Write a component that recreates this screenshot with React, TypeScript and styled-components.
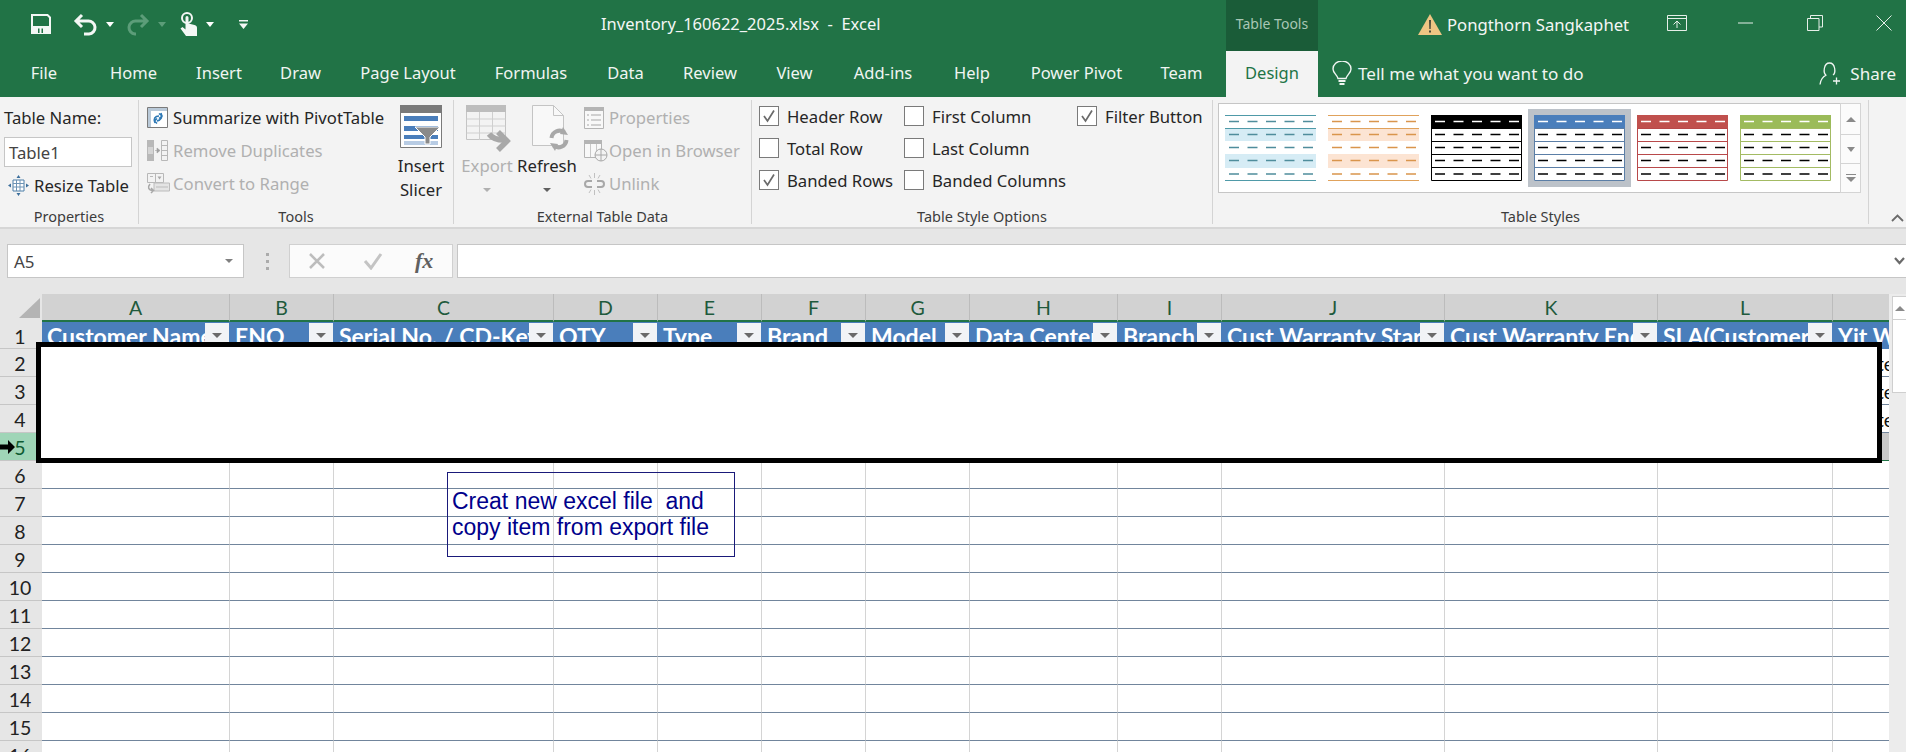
import React from "react";
import styled, { createGlobalStyle } from "styled-components";

const UI_FONT = `"Noto Sans", "Open Sans", sans-serif`;
const SHEET_FONT = `Lato, "Noto Sans", sans-serif`;

const GlobalStyle = createGlobalStyle`
  html, body {
    margin: 0;
    height: 752px;
    overflow: hidden;
    background: #fff;
    font-family: ${UI_FONT};
  }
  * { box-sizing: border-box; }
`;

const Window = styled.div`
  width: 1906px;
  height: 752px;
  overflow: hidden;
  display: flex;
  flex-direction: column;
`;

/* ---------- title bar ---------- */

const TitleBar = styled.div`
  height: 51px;
  flex: none;
  display: flex;
  background: #217346;
  color: #f4f7f5;
  font-size: 16.5px;
`;

const QuickAccess = styled.div`
  width: 601px;
  padding-left: 31px;
  display: flex;
  align-items: center;
  padding-bottom: 3px;
`;

const QatIcon = styled.span<{ $ml?: number }>`
  display: inline-flex;
  margin-left: ${(p) => p.$ml ?? 0}px;
`;

const Caret = styled.span<{ $ml?: number; $color?: string; $size?: number }>`
  display: inline-block;
  margin-left: ${(p) => p.$ml ?? 0}px;
  width: 0;
  height: 0;
  border-left: ${(p) => p.$size ?? 4.5}px solid transparent;
  border-right: ${(p) => p.$size ?? 4.5}px solid transparent;
  border-top: ${(p) => (p.$size ?? 4.5) + 0.5}px solid ${(p) => p.$color ?? "#fff"};
`;

const DocTitle = styled.div`
  width: 625px;
  height: 48px;
  line-height: 48px;
  white-space: pre;
`;

const ContextTab = styled.div`
  width: 92px;
  background: #1a5c38;
  color: #a9c7b5;
  font-size: 14px;
  text-align: center;
  line-height: 48px;
`;

const UserName = styled.div`
  margin-left: 100px;
  display: flex;
  align-items: center;
  height: 48px;
  gap: 5px;
  font-size: 16.7px;
`;

const WindowButton = styled.span<{ $ml: number }>`
  display: inline-flex;
  align-items: center;
  height: 46px;
  margin-left: ${(p) => p.$ml}px;
`;

/* ---------- tabs ---------- */

const TabBar = styled.div`
  height: 46px;
  flex: none;
  display: flex;
  align-items: stretch;
  background: #217346;
  color: #f0f5f2;
  font-size: 16.5px;
`;

const Tab = styled.div<{ $w: number; $active?: boolean }>`
  width: ${(p) => p.$w}px;
  text-align: center;
  line-height: 44px;
  background: ${(p) => (p.$active ? "#f3f3f3" : "transparent")};
  color: ${(p) => (p.$active ? "#217346" : "inherit")};
`;

const TellMe = styled.div`
  margin-left: 14px;
  display: flex;
  align-items: center;
  gap: 6px;
  padding-bottom: 2px;
  font-size: 17.1px;
`;

const Share = styled.div`
  margin-left: auto;
  margin-right: 10px;
  display: flex;
  align-items: center;
  gap: 8px;
  padding-bottom: 2px;
  font-size: 17px;
`;

/* ---------- ribbon ---------- */

const Ribbon = styled.div`
  height: 132px;
  flex: none;
  display: flex;
  padding-top: 3px;
  background: #f3f3f3;
  border-bottom: 2px solid #d6d6d6;
  color: #262626;
  font-size: 16.7px;
`;

const Group = styled.section<{ $w: number }>`
  width: ${(p) => p.$w}px;
  height: 124px;
  display: flex;
  flex-direction: column;
  border-right: 1px solid #d4d4d4;
`;

const GroupBody = styled.div<{ $pl: number }>`
  flex: 1;
  min-height: 0;
  display: flex;
  padding-left: ${(p) => p.$pl}px;
`;

const GroupLabel = styled.div`
  height: 15px;
  padding-bottom: 1px;
  line-height: 14px;
  font-size: 14.5px;
  text-align: center;
  color: #3c3c3c;
  white-space: nowrap;
`;

const Stack = styled.div<{ $w?: number; $ml?: number }>`
  display: flex;
  flex-direction: column;
  padding-top: 1px;
  width: ${(p) => (p.$w ? `${p.$w}px` : "auto")};
  margin-left: ${(p) => p.$ml ?? 0}px;
  flex: none;
`;

const StackRow = styled.div<{ $disabled?: boolean; $gap?: number; $mt?: number }>`
  height: 33px;
  margin-top: ${(p) => p.$mt ?? 0}px;
  display: flex;
  align-items: center;
  gap: ${(p) => p.$gap ?? 5}px;
  white-space: nowrap;
  color: ${(p) => (p.$disabled ? "#b0b0b0" : "inherit")};
`;

const NameInput = styled.div`
  width: 128px;
  height: 30px;
  line-height: 30px;
  padding-left: 4px;
  background: #fff;
  border: 1px solid #c6c6c6;
  color: #444;
`;

const ResizeSlot = styled.span`
  display: inline-flex;
  margin-left: 4px;
`;

const BigButton = styled.div<{ $w: number; $ml?: number; $disabled?: boolean }>`
  width: ${(p) => p.$w}px;
  margin-left: ${(p) => p.$ml ?? 0}px;
  flex: none;
  padding-top: 5px;
  display: flex;
  flex-direction: column;
  align-items: center;
  color: ${(p) => (p.$disabled ? "#b0b0b0" : "inherit")};
`;

const BigIcon = styled.div`
  height: 43px;
  margin-bottom: 6px;
  display: flex;
  justify-content: center;
`;

const BigLine = styled.div`
  height: 24px;
  line-height: 24px;
  white-space: nowrap;
`;

const CaretLine = styled.div`
  height: 24px;
  display: flex;
  align-items: center;
  justify-content: center;
`;

const OptionGrid = styled.div`
  display: grid;
  grid-auto-flow: column;
  grid-template-rows: repeat(3, 32px);
  grid-template-columns: 145px 173px auto;
`;

const Option = styled.label`
  display: flex;
  align-items: center;
  gap: 8px;
  white-space: nowrap;
`;

const CheckBox = styled.span`
  width: 20px;
  height: 20px;
  flex: none;
  display: inline-flex;
  align-items: center;
  justify-content: center;
  background: #fff;
  border: 1px solid #7a7a7a;
`;

const Gallery = styled.div`
  margin: 3px 0 0 5px;
  display: flex;
  height: 90px;
  width: 643px;
`;

const GalleryItems = styled.div`
  width: 622px;
  display: flex;
  align-items: center;
  background: #fff;
  border: 1px solid #c6c6c6;
  border-right: none;
`;

const GalleryItem = styled.div<{ $selected?: boolean }>`
  width: 103px;
  height: 78px;
  flex: none;
  display: flex;
  align-items: center;
  justify-content: center;
  background: ${(p) => (p.$selected ? "#bcc2c9" : "transparent")};
`;

const GalleryScroll = styled.div`
  width: 21px;
  display: flex;
  flex-direction: column;
`;

const GalleryButton = styled.div<{ $h: number }>`
  height: ${(p) => p.$h}px;
  display: flex;
  align-items: center;
  justify-content: center;
  background: #fbfbfb;
  border: 1px solid #d4d4d4;
  margin-top: -1px;
  &:first-child {
    margin-top: 0;
  }
`;

const UpCaret = styled.span`
  width: 0;
  height: 0;
  border-left: 5px solid transparent;
  border-right: 5px solid transparent;
  border-bottom: 5px solid #8a8a8a;
`;

const MoreCaret = styled.span`
  display: inline-flex;
  flex-direction: column;
  align-items: center;
  gap: 2px;
  &::before {
    content: "";
    width: 10px;
    height: 1px;
    background: #8a8a8a;
  }
  &::after {
    content: "";
    width: 0;
    height: 0;
    border-left: 5px solid transparent;
    border-right: 5px solid transparent;
    border-top: 5px solid #8a8a8a;
  }
`;

const CollapseArea = styled.div`
  flex: 1;
  height: 124px;
  display: flex;
  align-items: flex-end;
  justify-content: flex-end;
  padding: 0 2px 2px 0;
`;

/* ---------- formula bar ---------- */

const FormulaBar = styled.div`
  height: 65px;
  flex: none;
  display: flex;
  padding: 15px 0 16px 7px;
  background: #e6e6e6;
`;

const NameBox = styled.div`
  width: 237px;
  display: flex;
  align-items: center;
  justify-content: space-between;
  padding: 0 10px 0 6px;
  background: #fff;
  border: 1px solid #c6c6c6;
  font-size: 17px;
  color: #444;
`;

const GripDots = styled.div`
  width: 45px;
  display: flex;
  flex-direction: column;
  align-items: center;
  justify-content: center;
  gap: 4px;
  padding-left: 2px;
  & > i {
    width: 3px;
    height: 3px;
    background: #ababab;
  }
`;

const FxButtons = styled.div`
  width: 164px;
  display: flex;
  align-items: center;
  padding-left: 18px;
  gap: 37px;
  background: #fbfbfb;
  border: 1px solid #d0d0d0;
`;

const FxLabel = styled.span`
  font-family: "Liberation Serif", serif;
  font-style: italic;
  font-weight: 700;
  font-size: 22px;
  color: #606060;
  margin-left: -5px;
`;

const FormulaInput = styled.div`
  flex: 1;
  margin-left: 4px;
  display: flex;
  align-items: center;
  justify-content: flex-end;
  padding-right: 1px;
  background: #fff;
  border: 1px solid #c6c6c6;
  border-right: none;
`;

/* ---------- sheet ---------- */

const SheetArea = styled.div`
  flex: 1;
  min-height: 0;
  position: relative;
  display: flex;
  overflow: hidden;
  background: #fff;
`;

const SheetGrid = styled.div`
  width: 1889px;
  flex: none;
  overflow: hidden;
  font-family: ${SHEET_FONT};
`;

const HeadRow = styled.div`
  height: 28px;
  display: flex;
`;

const Corner = styled.div`
  width: 42px;
  flex: none;
  display: flex;
  justify-content: flex-end;
  align-items: center;
  padding: 0 2px 0 0;
  background: #e6e6e6;
`;

const ColHead = styled.div<{ $w: number }>`
  width: ${(p) => p.$w}px;
  flex: none;
  height: 28px;
  line-height: 27px;
  text-align: center;
  font-size: 19.5px;
  color: #1f5a3c;
  background: #d2d2d2;
  border-right: 1px solid #bcbcbc;
  border-bottom: 2px solid #217346;
  &:last-child {
    border-right: none;
  }
`;

const Row = styled.div<{ $first?: boolean }>`
  height: ${(p) => (p.$first ? 27 : 28)}px;
  display: flex;
`;

const RowHead = styled.div<{ $selected?: boolean }>`
  width: 42px;
  flex: none;
  text-align: center;
  line-height: 29px;
  font-size: 19.5px;
  padding-right: 2px;
  color: ${(p) => (p.$selected ? "#0f5c32" : "#222")};
  background: ${(p) => (p.$selected ? "#9fd5b7" : "#e6e6e6")};
  border-bottom: 1px solid #c6c6c6;
`;

const Cell = styled.div<{ $w: number; $selected?: boolean }>`
  width: ${(p) => p.$w}px;
  flex: none;
  overflow: hidden;
  white-space: nowrap;
  line-height: 30px;
  font-size: 19px;
  color: #111;
  background: ${(p) => (p.$selected ? "#c8c8c8" : "#fff")};
  border-right: 1px solid #d4d4d4;
  border-bottom: 1px solid ${(p) => (p.$selected ? "#217346" : "#71859c")};
`;

const TailText = styled.span`
  padding-left: 44px;
`;

const HeaderCell = styled.div<{ $w: number }>`
  position: relative;
  width: ${(p) => p.$w}px;
  flex: none;
  overflow: hidden;
  white-space: nowrap;
  padding-left: 5px;
  line-height: 28px;
  font-size: 23px;
  font-weight: 700;
  color: #fff;
  background: #4a7ebb;
`;

const FilterButton = styled.span`
  position: absolute;
  top: 1px;
  right: 1px;
  width: 24px;
  height: 25px;
  display: flex;
  align-items: center;
  justify-content: center;
  background: #f1f3f6;
`;

const Scrollbar = styled.div`
  width: 17px;
  flex: none;
  display: flex;
  flex-direction: column;
  padding: 2px 0 0 3px;
  background: #ececec;
`;

const ScrollArrow = styled.div`
  height: 24px;
  display: flex;
  align-items: center;
  justify-content: center;
  background: #fff;
  border: 1px solid #cfcfcf;
  border-right: none;
`;

const ScrollThumb = styled.div`
  height: 73px;
  background: #fff;
  border: 1px solid #cfcfcf;
  border-top: none;
  border-right: none;
`;

const Blackout = styled.div`
  position: absolute;
  left: 36px;
  top: 48px;
  width: 1846px;
  height: 121px;
  background: #fff;
  border: 5px solid #000;
`;

const SelectArrow = styled.svg`
  position: absolute;
  left: 0;
  top: 146px;
`;

const TextBox = styled.div`
  position: absolute;
  left: 447px;
  top: 178px;
  width: 288px;
  height: 85px;
  padding: 15px 0 0 4px;
  border: 1px solid #1a1a7a;
  font-family: "Liberation Sans", Arial, sans-serif;
  font-size: 23px;
  line-height: 26px;
  color: #00008b;
  white-space: pre;
`;

/* ---------- icons ---------- */

const SaveIcon = () => (
  <svg width="20" height="20" viewBox="0 0 20 20">
    <path d="M1 1h15.5L19 3.5V19H1z" fill="none" stroke="#f4f7f5" strokeWidth="2" />
    <path d="M2 12h16v7H2z" fill="#f4f7f5" />
    <path d="M7 14.5h1.5V19H7zM10.5 14.5H12V19h-1.5z" fill="#217346" />
  </svg>
);

const UndoIcon = ({ color = "#f4f7f5" }: { color?: string }) => (
  <svg width="24" height="24" viewBox="0 0 24 24">
    <path
      d="M9 3 3 9l6 6M3 9h12a6.5 6.5 0 0 1 1 13h-5"
      fill="none"
      stroke={color}
      strokeWidth="3"
    />
  </svg>
);

const RedoIcon = () => (
  <svg width="24" height="24" viewBox="0 0 24 24">
    <path
      d="M15 3l6 6-6 6M21 9H10a6.5 6.5 0 0 0-1 13h1"
      fill="none"
      stroke="#5c9d79"
      strokeWidth="3"
    />
  </svg>
);

const TouchIcon = () => (
  <svg width="18" height="24" viewBox="0 0 18 24">
    <circle cx="7" cy="6" r="5" fill="none" stroke="#f4f7f5" strokeWidth="2" />
    <path
      d="M5.5 5.5a1.5 1.5 0 0 1 3 0v6l6 1.5c2 .6 2.5 1.5 2.5 3V24H6L.5 16.5l2-1.5 3 2.5z"
      fill="#f4f7f5"
    />
  </svg>
);

const CustomizeIcon = () => (
  <svg width="9" height="9" viewBox="0 0 9 9">
    <path d="M0 0h9v1.5H0z M0 3.5h9L4.5 9z" fill="#f4f7f5" />
  </svg>
);

const WarningIcon = () => (
  <svg width="24" height="21" viewBox="0 0 24 21">
    <path d="M12 0 24 21H0z" fill="#eec583" />
    <path d="M11 6h2l-.3 9h-1.4zM11 16.5h2v2h-2z" fill="#4a4a3a" />
  </svg>
);

const RibbonDisplayIcon = () => (
  <svg width="20" height="16" viewBox="0 0 20 16">
    <path
      d="M.5.5h19v15H.5zM.5 3.5h19M10 13V6.5M6.5 9.5 10 6l3.5 3.5"
      fill="none"
      stroke="#e6efe9"
    />
  </svg>
);

const MinimizeIcon = () => (
  <svg width="15" height="2" viewBox="0 0 15 2">
    <path d="M0 1h15" stroke="#e6efe9" />
  </svg>
);

const RestoreIcon = () => (
  <svg width="16" height="16" viewBox="0 0 16 16">
    <path
      d="M.5 3.5h11.5v12H.5zM3.5 3.5V.5h12v11.5H12"
      fill="none"
      stroke="#e6efe9"
    />
  </svg>
);

const CloseIcon = () => (
  <svg width="16" height="16" viewBox="0 0 16 16">
    <path d="M.5.5l15 15M15.5.5l-15 15" stroke="#e6efe9" />
  </svg>
);

const BulbIcon = () => (
  <svg width="20" height="25" viewBox="0 0 20 25">
    <path
      d="M6 17.5C5 13.5 1 12 1 8a9 8 0 0 1 18 0c0 4-4 5.5-5 9.5z"
      fill="none"
      stroke="#f0f5f2"
      strokeWidth="1.4"
    />
    <path d="M6.5 20h7M7.5 23h5" stroke="#f0f5f2" strokeWidth="2" />
  </svg>
);

const ShareIcon = () => (
  <svg width="23" height="23" viewBox="0 0 23 23">
    <path
      d="M7 13C4 11 4.5 1 10.5 1S17 11 14 13M7.5 13C4 14.5 1.5 18 1 22.5M17.5 15.5v7M14 19h7"
      fill="none"
      stroke="#f0f5f2"
      strokeWidth="1.3"
    />
  </svg>
);

const ResizeIcon = () => (
  <svg width="21" height="21" viewBox="0 0 21 21">
    <path d="M5 5h11v11H5z" fill="#fff" stroke="#4d7ea8" />
    <path d="M5 8.5h11M5 12h11M8.5 5v11M12 5v11" stroke="#6f94b5" />
    <path d="M10.5 0l2 3h-4zM10.5 21l-2-3h4zM0 10.5l3-2v4zM21 10.5l-3 2v-4z" fill="#3c6f9c" />
  </svg>
);

const PivotIcon = () => (
  <svg width="21" height="21" viewBox="0 0 21 21">
    <path d="M.5.5h20v20H.5z" fill="#fff" stroke="#7a7a7a" />
    <path d="M1 1h19v3H1zM1 4h3v16H1z" fill="#b9c9d8" />
    <path
      d="M8 16c-2-4 0-7 4-7M12 6.5 15 9l-3 2.5M14 6c2 4 0 7-4 8M10 11.5 7.5 14l2.5 2.5"
      fill="none"
      stroke="#2f79b5"
      strokeWidth="1.6"
    />
  </svg>
);

const DuplicatesIcon = () => (
  <svg width="21" height="21" viewBox="0 0 21 21">
    <path d="M0 0h7v21H0z" fill="#b8b8b8" />
    <path d="M1 7h5v7H1z" fill="#d4d4d4" />
    <path d="M14.5.5h6v20h-6zM14.5 5.5h6M14.5 10.5h6M14.5 15.5h6" fill="#f3f3f3" stroke="#b8b8b8" />
    <path d="M8 10.5h3M10 8l3 2.5L10 13z" fill="#9f9f9f" stroke="#9f9f9f" strokeWidth=".6" />
  </svg>
);

const ConvertIcon = () => (
  <svg width="23" height="21" viewBox="0 0 23 21">
    <path d="M.5.5h16v9H.5zM8.5.5v9" fill="#f3f3f3" stroke="#b8b8b8" />
    <path d="M10.5 3.5h4l-2 3z" fill="#a8a8a8" />
    <path d="M3 3.5h3" stroke="#b8b8b8" />
    <path d="M7 10h15.5v8H7z" fill="#e4e4e4" stroke="#bcbcbc" />
    <path d="M9 14h12" stroke="#bcbcbc" />
    <path d="M3 11C.5 14 1 17 6 17.5M4 15l2.5 2.5L4 20" fill="none" stroke="#a8a8a8" strokeWidth="1.5" />
  </svg>
);

const SlicerIcon = () => (
  <svg width="42" height="43" viewBox="0 0 42 43">
    <path d="M.5.5h41v42H.5z" fill="#fff" stroke="#7a7a7a" />
    <path d="M0 0h42v8H0z" fill="#7a7a7a" />
    <path d="M4 11h34v5H4zM4 21h34v5H4zM4 30h34v4H4z" fill="#4a7ebb" />
    <path d="M4 36h34v4H4z" fill="#b8cce4" />
    <path d="M15 22h25L30 32v7h-5v-7z" fill="#8a8a8a" stroke="#fff" />
  </svg>
);

const ExportIcon = () => (
  <svg width="42" height="43" viewBox="0 0 42 43" overflow="visible">
    <path d="M.5.5h39v34H.5z" fill="#f3f3f3" stroke="#c4c4c4" />
    <path d="M0 0h40v7H0z" fill="#bdbdbd" />
    <path d="M.5 14h39M.5 21h39M.5 28h39M13.5 7v28M26.5 7v28" stroke="#cfcfcf" />
    <path d="M23 29c3 4 7 6 15 6" fill="none" stroke="#a8a8a8" strokeWidth="5.5" />
    <path d="M32 27l9 9-9 9" fill="none" stroke="#a8a8a8" strokeWidth="5.5" />
  </svg>
);

const RefreshDocIcon = () => (
  <svg width="42" height="43" viewBox="0 0 42 43" overflow="visible">
    <path d="M6.5.5h21l10 10v30h-31z" fill="#f8f8f8" stroke="#c4c4c4" />
    <path d="M27.5.5v10h10" fill="none" stroke="#c4c4c4" />
    <path
      d="M25.5 33a8 8 0 0 1 13-5.5M40.5 35a8 8 0 0 1-13 5.5"
      fill="none"
      stroke="#a8a8a8"
      strokeWidth="4"
    />
    <path d="M37 22l5 8-8-1zM29 46l-5-8 8 1z" fill="#a8a8a8" />
  </svg>
);

const PropertiesIcon = () => (
  <svg width="21" height="22" viewBox="0 0 21 22">
    <path d="M.5.5h19v21H.5z" fill="#f8f8f8" stroke="#b4b4b4" />
    <path d="M0 0h20v4H0z" fill="#b4b4b4" />
    <path d="M7 8h10M7 13h10M7 18h10M3 8h2M3 13h2M3 18h2" stroke="#a8a8a8" />
  </svg>
);

const BrowserIcon = () => (
  <svg width="24" height="22" viewBox="0 0 24 22">
    <path d="M.5 1.5h17v16H.5z" fill="#f8f8f8" stroke="#b4b4b4" />
    <path d="M0 0h18v4H0z" fill="#b4b4b4" />
    <path d="M6.5 4v13M12.5 4v13" stroke="#c8c8c8" />
    <circle cx="17" cy="15" r="6" fill="#f3f3f3" stroke="#a8a8a8" />
    <path d="M11 15h12M17 9v12" stroke="#a8a8a8" />
  </svg>
);

const UnlinkIcon = () => (
  <svg width="21" height="22" viewBox="0 0 21 22">
    <path
      d="M8 8H4a3 3 0 0 0 0 6M13 8h4a3 3 0 0 1 0 6h-4M4 14h4"
      fill="none"
      stroke="#a8a8a8"
      strokeWidth="2"
    />
    <path d="M10.5 0v5M5 2l2 3.5M16 2l-2 3.5M10.5 17v5M5 20l2-3.5M16 20l-2-3.5" stroke="#c0c0c0" />
  </svg>
);

const CheckMark = () => (
  <svg width="14" height="14" viewBox="0 0 14 14">
    <path d="M2 7l3.5 5L12 1.5" fill="none" stroke="#6a6a6a" strokeWidth="1.7" />
  </svg>
);

const XMark = () => (
  <svg width="18" height="18" viewBox="0 0 18 18">
    <path d="M2 2l14 14M16 2 2 16" stroke="#bdbdbd" strokeWidth="2.5" />
  </svg>
);

const TickMark = () => (
  <svg width="20" height="18" viewBox="0 0 20 18">
    <path d="M2 9l6 7L18 2" fill="none" stroke="#c4c4c4" strokeWidth="3" />
  </svg>
);

const ChevronDown = () => (
  <svg width="11" height="8" viewBox="0 0 11 8">
    <path d="M1 1l4.5 5L10 1" fill="none" stroke="#6a6a6a" strokeWidth="2.2" />
  </svg>
);

const ChevronUp = () => (
  <svg width="13" height="8" viewBox="0 0 13 8">
    <path d="M1 7l5.5-5.5L12 7" fill="none" stroke="#6a6a6a" strokeWidth="1.8" />
  </svg>
);

const CornerMark = () => (
  <svg width="21" height="20" viewBox="0 0 21 20">
    <path d="M21 0v20H0z" fill="#b4b4b4" />
  </svg>
);

type ThumbStyle = {
  line: string;
  dash: string;
  header?: string;
  band?: string;
};

const THUMB_ROWS = [6.5, 19.5, 32.5, 45.5, 59];
const THUMB_LINES = [13, 26, 39, 52];

const StyleThumb = ({ line, dash, header, band }: ThumbStyle) => (
  <svg width="91" height="66" viewBox="0 0 91 66">
    <path d="M0 0h91v66H0z" fill="#fff" />
    {band && <path d="M0 13h91v13H0zM0 39h91v14H0z" fill={band} />}
    {header && <path d="M0 0h91v13H0z" fill={header} />}
    {header ? (
      <>
        <path d="M.5 13v52.5h90V13" fill="none" stroke={line} />
        {THUMB_LINES.map((y) => (
          <path key={y} d={`M0 ${y + 0.5}h91`} stroke={line} />
        ))}
      </>
    ) : (
      <path d="M0 .5h91M0 13.5h91M0 65.5h91" stroke={line} />
    )}
    {THUMB_ROWS.map((y, i) => (
      <path
        key={y}
        d={`M4 ${y}h84`}
        stroke={i === 0 && header ? "#fff" : dash}
        strokeDasharray="10 8.5"
        strokeWidth="1.3"
      />
    ))}
  </svg>
);

/* ---------- data ---------- */

const TABS: [string, number][] = [
  ["File", 88],
  ["Home", 91],
  ["Insert", 80],
  ["Draw", 83],
  ["Page Layout", 132],
  ["Formulas", 114],
  ["Data", 75],
  ["Review", 94],
  ["View", 75],
  ["Add-ins", 102],
  ["Help", 76],
  ["Power Pivot", 133],
  ["Team", 77],
];

const COLUMNS = [
  { id: "A", w: 188, title: "Customer Name" },
  { id: "B", w: 104, title: "ENO" },
  { id: "C", w: 220, title: "Serial No. / CD-Key" },
  { id: "D", w: 104, title: "QTY" },
  { id: "E", w: 104, title: "Type" },
  { id: "F", w: 104, title: "Brand" },
  { id: "G", w: 104, title: "Model" },
  { id: "H", w: 148, title: "Data Center" },
  { id: "I", w: 104, title: "Branch" },
  { id: "J", w: 223, title: "Cust Warranty Start" },
  { id: "K", w: 213, title: "Cust Warranty End" },
  { id: "L", w: 175, title: "SLA(Customer)" },
  // runs on past the window edge, so its letter is out of view
  { id: "M", w: 170, title: "Yit Warranty" },
];

const THUMBS: ThumbStyle[] = [
  { line: "#4f9aa8", dash: "#4f8d9c", band: "#d6ecf5" },
  { line: "#e0a25c", dash: "#d9954c", band: "#fce4d3" },
  { line: "#000", dash: "#000", header: "#000" },
  { line: "#5b7ea6", dash: "#000", header: "#4a7ebb" },
  { line: "#b8494a", dash: "#000", header: "#c0504d" },
  { line: "#a3bb63", dash: "#000", header: "#9bbb59" },
];

const ROW_NUMBERS = Array.from({ length: 15 }, (_, i) => i + 2);
const TAIL_ROWS = [2, 3, 4];

const Check = ({ on, label }: { on?: boolean; label: string }) => (
  <Option>
    <CheckBox>{on && <CheckMark />}</CheckBox>
    {label}
  </Option>
);

const App: React.FC = () => (
  <Window>
    <GlobalStyle />
    <TitleBar>
      <QuickAccess>
        <SaveIcon />
        <QatIcon $ml={22}>
          <UndoIcon />
        </QatIcon>
        <Caret $ml={9} />
        <QatIcon $ml={12}>
          <RedoIcon />
        </QatIcon>
        <Caret $ml={8} $color="#5c9d79" />
        <QatIcon $ml={14}>
          <TouchIcon />
        </QatIcon>
        <Caret $ml={8} />
        <QatIcon $ml={25}>
          <CustomizeIcon />
        </QatIcon>
      </QuickAccess>
      <DocTitle>{"Inventory_160622_2025.xlsx  -  Excel"}</DocTitle>
      <ContextTab>Table Tools</ContextTab>
      <UserName>
        <WarningIcon />
        Pongthorn Sangkaphet
      </UserName>
      <WindowButton $ml={38}>
        <RibbonDisplayIcon />
      </WindowButton>
      <WindowButton $ml={51}>
        <MinimizeIcon />
      </WindowButton>
      <WindowButton $ml={54}>
        <RestoreIcon />
      </WindowButton>
      <WindowButton $ml={53}>
        <CloseIcon />
      </WindowButton>
    </TitleBar>

    <TabBar>
      {TABS.map(([label, w]) => (
        <Tab key={label} $w={w}>
          {label}
        </Tab>
      ))}
      <Tab $w={6} />
      <Tab $w={92} $active>
        Design
      </Tab>
      <TellMe>
        <BulbIcon />
        Tell me what you want to do
      </TellMe>
      <Share>
        <ShareIcon />
        Share
      </Share>
    </TabBar>

    <Ribbon>
      <Group $w={139}>
        <GroupBody $pl={4}>
          <Stack>
            <StackRow>Table Name:</StackRow>
            <StackRow $mt={1}>
              <NameInput>Table1</NameInput>
            </StackRow>
            <StackRow $mt={1}>
              <ResizeSlot>
                <ResizeIcon />
              </ResizeSlot>
              Resize Table
            </StackRow>
          </Stack>
        </GroupBody>
        <GroupLabel>Properties</GroupLabel>
      </Group>

      <Group $w={315}>
        <GroupBody $pl={8}>
          <Stack $w={252}>
            <StackRow>
              <PivotIcon />
              Summarize with PivotTable
            </StackRow>
            <StackRow $disabled>
              <DuplicatesIcon />
              Remove Duplicates
            </StackRow>
            <StackRow $disabled $gap={3}>
              <ConvertIcon />
              Convert to Range
            </StackRow>
          </Stack>
          <BigButton $w={44}>
            <BigIcon>
              <SlicerIcon />
            </BigIcon>
            <BigLine>Insert</BigLine>
            <BigLine>Slicer</BigLine>
          </BigButton>
        </GroupBody>
        <GroupLabel>Tools</GroupLabel>
      </Group>

      <Group $w={298}>
        <GroupBody $pl={8}>
          <BigButton $w={50} $disabled>
            <BigIcon>
              <ExportIcon />
            </BigIcon>
            <BigLine>Export</BigLine>
            <CaretLine>
              <Caret $color="#b0b0b0" $size={4} />
            </CaretLine>
          </BigButton>
          <BigButton $w={58} $ml={6}>
            <BigIcon>
              <RefreshDocIcon />
            </BigIcon>
            <BigLine>Refresh</BigLine>
            <CaretLine>
              <Caret $color="#606060" $size={4} />
            </CaretLine>
          </BigButton>
          <Stack $ml={8}>
            <StackRow $disabled $gap={4}>
              <PropertiesIcon />
              Properties
            </StackRow>
            <StackRow $disabled $gap={1}>
              <BrowserIcon />
              Open in Browser
            </StackRow>
            <StackRow $disabled $gap={4}>
              <UnlinkIcon />
              Unlink
            </StackRow>
          </Stack>
        </GroupBody>
        <GroupLabel>External Table Data</GroupLabel>
      </Group>

      <Group $w={461}>
        <GroupBody $pl={7}>
          <OptionGrid>
            <Check on label="Header Row" />
            <Check label="Total Row" />
            <Check on label="Banded Rows" />
            <Check label="First Column" />
            <Check label="Last Column" />
            <Check label="Banded Columns" />
            <Check on label="Filter Button" />
          </OptionGrid>
        </GroupBody>
        <GroupLabel>Table Style Options</GroupLabel>
      </Group>

      <Group $w={656}>
        <GroupBody $pl={0}>
          <Gallery>
            <GalleryItems>
              {THUMBS.map((t, i) => (
                <GalleryItem key={t.line} $selected={i === 3}>
                  <StyleThumb {...t} />
                </GalleryItem>
              ))}
            </GalleryItems>
            <GalleryScroll>
              <GalleryButton $h={32}>
                <UpCaret />
              </GalleryButton>
              <GalleryButton $h={30}>
                <Caret $color="#8a8a8a" />
              </GalleryButton>
              <GalleryButton $h={30}>
                <MoreCaret />
              </GalleryButton>
            </GalleryScroll>
          </Gallery>
        </GroupBody>
        <GroupLabel>Table Styles</GroupLabel>
      </Group>

      <CollapseArea>
        <ChevronUp />
      </CollapseArea>
    </Ribbon>

    <FormulaBar>
      <NameBox>
        A5
        <Caret $color="#808080" $size={4} />
      </NameBox>
      <GripDots>
        <i />
        <i />
        <i />
      </GripDots>
      <FxButtons>
        <XMark />
        <TickMark />
        <FxLabel>fx</FxLabel>
      </FxButtons>
      <FormulaInput>
        <ChevronDown />
      </FormulaInput>
    </FormulaBar>

    <SheetArea>
      <SheetGrid>
        <HeadRow>
          <Corner>
            <CornerMark />
          </Corner>
          {COLUMNS.map((c) => (
            <ColHead key={c.id} $w={c.w}>
              {c.id}
            </ColHead>
          ))}
        </HeadRow>
        <Row $first>
          <RowHead>1</RowHead>
          {COLUMNS.map((c) => (
            <HeaderCell key={c.id} $w={c.w}>
              {c.title}
              <FilterButton>
                <Caret $color="#6a6a6a" $size={5} />
              </FilterButton>
            </HeaderCell>
          ))}
        </Row>
        {ROW_NUMBERS.map((n) => (
          <Row key={n}>
            <RowHead $selected={n === 5}>{n}</RowHead>
            {COLUMNS.map((c) => (
              <Cell key={c.id} $w={c.w} $selected={n === 5}>
                {c.id === "M" && TAIL_ROWS.includes(n) ? <TailText>te</TailText> : null}
              </Cell>
            ))}
          </Row>
        ))}
      </SheetGrid>
      <Scrollbar>
        <ScrollArrow>
          <UpCaret />
        </ScrollArrow>
        <ScrollThumb />
      </Scrollbar>

      <Blackout />
      <SelectArrow width="16" height="14" viewBox="0 0 16 14">
        <path d="M0 4.5h8V0l7 7-7 7V9.5H0z" fill="#000" />
      </SelectArrow>
      <TextBox>{"Creat new excel file  and\ncopy item from export file"}</TextBox>
    </SheetArea>
  </Window>
);

export default App;
